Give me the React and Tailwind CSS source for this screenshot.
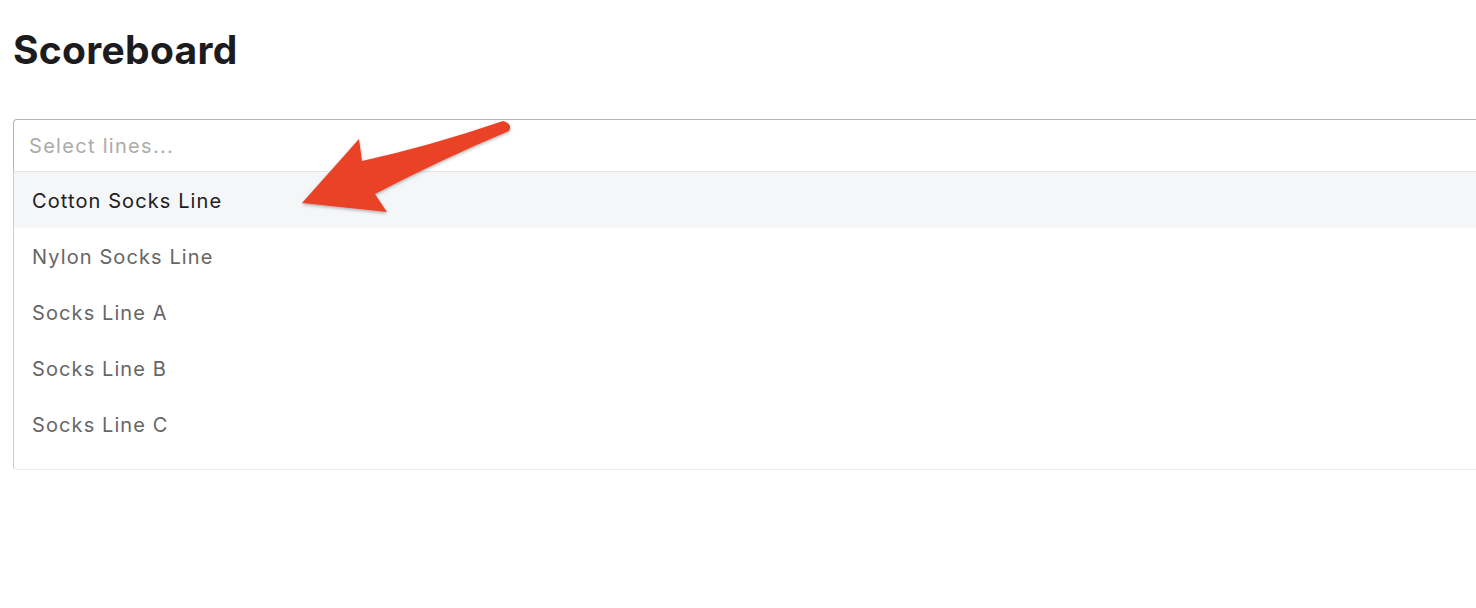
import React from "react";

const LINES = [
  "Cotton Socks Line",
  "Nylon Socks Line",
  "Socks Line A",
  "Socks Line B",
  "Socks Line C",
];

const Arrow = () => (
  <svg
    className="absolute left-0 top-0 pointer-events-none"
    width="560"
    height="260"
    viewBox="0 0 560 260"
  >
    <defs>
      <filter id="arrowShadow" x="-10%" y="-10%" width="120%" height="130%">
        <feDropShadow dx="0" dy="1.5" stdDeviation="1.5" floodColor="#000" floodOpacity="0.3" />
      </filter>
    </defs>
    <path
      d="M 503 121 Q 430 146 362 161 L 359 139 L 302 203 L 387 212 L 375 194 Q 440 160 509 131 Q 513 124 503 121 Z"
      fill="#ea4228"
      filter="url(#arrowShadow)"
    />
  </svg>
);

export default function App() {
  return (
    <div
      className="relative min-h-screen bg-white overflow-hidden pl-[13px]"
      style={{ fontFamily: "Inter, 'Liberation Sans', sans-serif" }}
    >
      <h1 className="pt-[26px] text-[39px] leading-[48px] font-bold text-[#1c1c1e] tracking-[0.3px]">
        Scoreboard
      </h1>

      <div className="mt-[45px]">
        <div className="h-[53px] flex items-center pl-[15px] border-t border-l border-[#b5b5b5] border-b-[#e4e4e4] border-b rounded-tl-[4px] text-[20px] tracking-[1.3px] text-[#ababab]">
          Select lines...
        </div>
        <div className="border-l border-[#cdcdcd] border-b border-b-[#ececec] rounded-bl-[4px] pb-[17px]">
          {LINES.map((line, i) => (
            <div
              key={line}
              className={
                "h-[56px] flex items-center pl-[18px] pt-[2px] text-[20px] tracking-[1.1px] " +
                (i === 0 ? "bg-[#f5f6f8] text-[#202020]" : "text-[#666666]")
              }
            >
              {line}
            </div>
          ))}
        </div>
      </div>

      <Arrow />
    </div>
  );
}
